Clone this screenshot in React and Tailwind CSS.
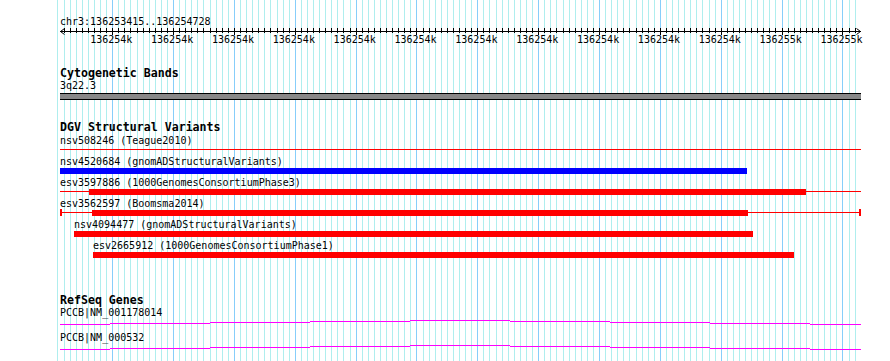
import React from "react";

const START = 136253415;
const SCALE = 0.6085;
const X0 = 61;
const LEFT = 60;
const RIGHT = 861;
const TRACK_W = RIGHT - LEFT;
const bx = (bp) => X0 + (bp - START) * SCALE;

const grid = [];
for (let bp = 136253410; bp <= 136254720; bp += 10) {
  grid.push({ x: Math.floor(bx(bp)) + 0.5, major: bp % 100 === 0 });
}

const majors = [];
for (let bp = 136253500; bp <= 136254700; bp += 100) {
  majors.push({ x: bx(bp), label: bp < 136254600 ? "136254k" : "136255k" });
}

const features = [
  { label: "nsv508246 (Teague2010)", labelX: 60, thin: [60, 861], color: "#ff0000" },
  { label: "nsv4520684 (gnomADStructuralVariants)", labelX: 60, thick: [60, 747], color: "#0000ff" },
  { label: "esv3597886 (1000GenomesConsortiumPhase3)", labelX: 60, thin: [60, 861], thick: [89, 806], color: "#ff0000" },
  { label: "esv3562597 (Boomsma2014)", labelX: 60, thin: [60, 861], thick: [92, 748], caps: true, color: "#ff0000" },
  { label: "nsv4094477 (gnomADStructuralVariants)", labelX: 74, thick: [74, 753], color: "#ff0000" },
  { label: "esv2665912 (1000GenomesConsortiumPhase1)", labelX: 93, thick: [93, 794], color: "#ff0000" },
];

const genes = ["PCCB|NM_001178014", "PCCB|NM_000532"];
const hatSegments = [
  [60, 110, 4],
  [110, 210, 3],
  [210, 310, 2],
  [310, 410, 1],
  [410, 510, 0],
  [510, 610, 1],
  [610, 710, 2],
  [710, 810, 3],
  [810, 861, 4],
];

function Grid() {
  return (
    <svg className="absolute inset-0" width="890" height="361" shapeRendering="crispEdges">
      {grid.map((g, i) => (
        <line
          key={i}
          x1={g.x}
          x2={g.x}
          y1="0"
          y2="361"
          stroke={g.major ? "#87cefa" : "#afeeee"}
          strokeWidth="1"
        />
      ))}
    </svg>
  );
}

function Ruler() {
  const ticks = grid.filter((g) => g.x >= LEFT && g.x <= RIGHT);
  return (
    <div className="relative h-[18px] w-[801px]">
      <svg className="absolute left-0 top-0" width="801" height="8" shapeRendering="crispEdges">
        <line x1="0" x2="801" y1="3.5" y2="3.5" stroke="#000" strokeWidth="1" />
        {ticks.map((t, i) => (
          <line
            key={i}
            x1={t.x - LEFT}
            x2={t.x - LEFT}
            y1="0"
            y2={t.major ? 7 : 5}
            stroke="#000"
            strokeWidth="1"
          />
        ))}
      </svg>
      <svg className="absolute left-0 top-0" width="801" height="8">
        <polyline points="4.5,0.5 0.5,3.5 4.5,6.5" fill="none" stroke="#000" strokeWidth="1" />
        <polyline points="796.5,0.5 800.5,3.5 796.5,6.5" fill="none" stroke="#000" strokeWidth="1" />
      </svg>
      {majors.map((m, i) => (
        <span
          key={i}
          className="absolute top-[6px] whitespace-nowrap text-[10px] leading-[12px] text-black"
          style={{ left: m.x - LEFT - 22.5 }}
        >
          {m.label}
        </span>
      ))}
    </div>
  );
}

function FeatureRow({ f }) {
  return (
    <div className="flex h-[21px] flex-col">
      <div
        className="h-[12px] whitespace-nowrap text-[10px] leading-[12px] text-black"
        style={{ marginLeft: f.labelX - LEFT }}
      >
        {f.label}
      </div>
      <div className="relative h-[6px] w-[801px]">
        {f.thin && (
          <div
            className="absolute top-[2px] h-[1px]"
            style={{ left: f.thin[0] - LEFT, width: f.thin[1] - f.thin[0], background: f.color }}
          />
        )}
        {f.thick && (
          <div
            className="absolute top-0 h-[6px]"
            style={{ left: f.thick[0] - LEFT, width: f.thick[1] - f.thick[0], background: f.color }}
          />
        )}
        {f.caps && (
          <>
            <div className="absolute left-0 top-[-1px] h-[7px] w-[2px] bg-[#ff0000]" />
            <div className="absolute right-0 top-[-1px] h-[7px] w-[2px] bg-[#ff0000]" />
          </>
        )}
      </div>
    </div>
  );
}

function GeneRow({ label }) {
  return (
    <div className="flex h-[25px] flex-col">
      <div className="h-[12px] whitespace-nowrap text-[10px] leading-[12px] text-black">{label}</div>
      <svg width="801" height="13" shapeRendering="crispEdges">
        {hatSegments.map(([a, b, dy], i) => (
          <rect key={i} x={a - LEFT} y={1 + dy} width={b - a} height="1" fill="#ff00ff" />
        ))}
      </svg>
    </div>
  );
}

export default function App() {
  return (
    <div className="relative h-[361px] w-[890px] overflow-hidden bg-white font-['DejaVu_Sans_Mono',monospace]">
      <Grid />
      <div className="relative flex flex-col pl-[60px] pt-[16px]">
        <div className="h-[12px] whitespace-nowrap text-[10px] leading-[12px] text-black">
          chr3:136253415..136254728
        </div>
        <Ruler />

        <div className="mt-[21px] h-[13px] whitespace-nowrap text-[11.6px] font-bold leading-[13px] text-black">
          Cytogenetic Bands
        </div>
        <div className="h-[12px] whitespace-nowrap text-[10px] leading-[12px] text-black">3q22.3</div>
        <div className="mt-[1px] h-[7px] w-[801px] border-y border-black bg-[#888888]" />

        <div className="mt-[21px] h-[13px] whitespace-nowrap text-[11.6px] font-bold leading-[13px] text-black">
          DGV Structural Variants
        </div>
        <div className="mt-[1px] flex flex-col">
          {features.map((f, i) => (
            <FeatureRow key={i} f={f} />
          ))}
        </div>

        <div className="mt-[33px] h-[13px] whitespace-nowrap text-[11.6px] font-bold leading-[13px] text-black">
          RefSeq Genes
        </div>
        <div className="flex flex-col">
          {genes.map((g, i) => (
            <GeneRow key={i} label={g} />
          ))}
        </div>
      </div>
    </div>
  );
}
